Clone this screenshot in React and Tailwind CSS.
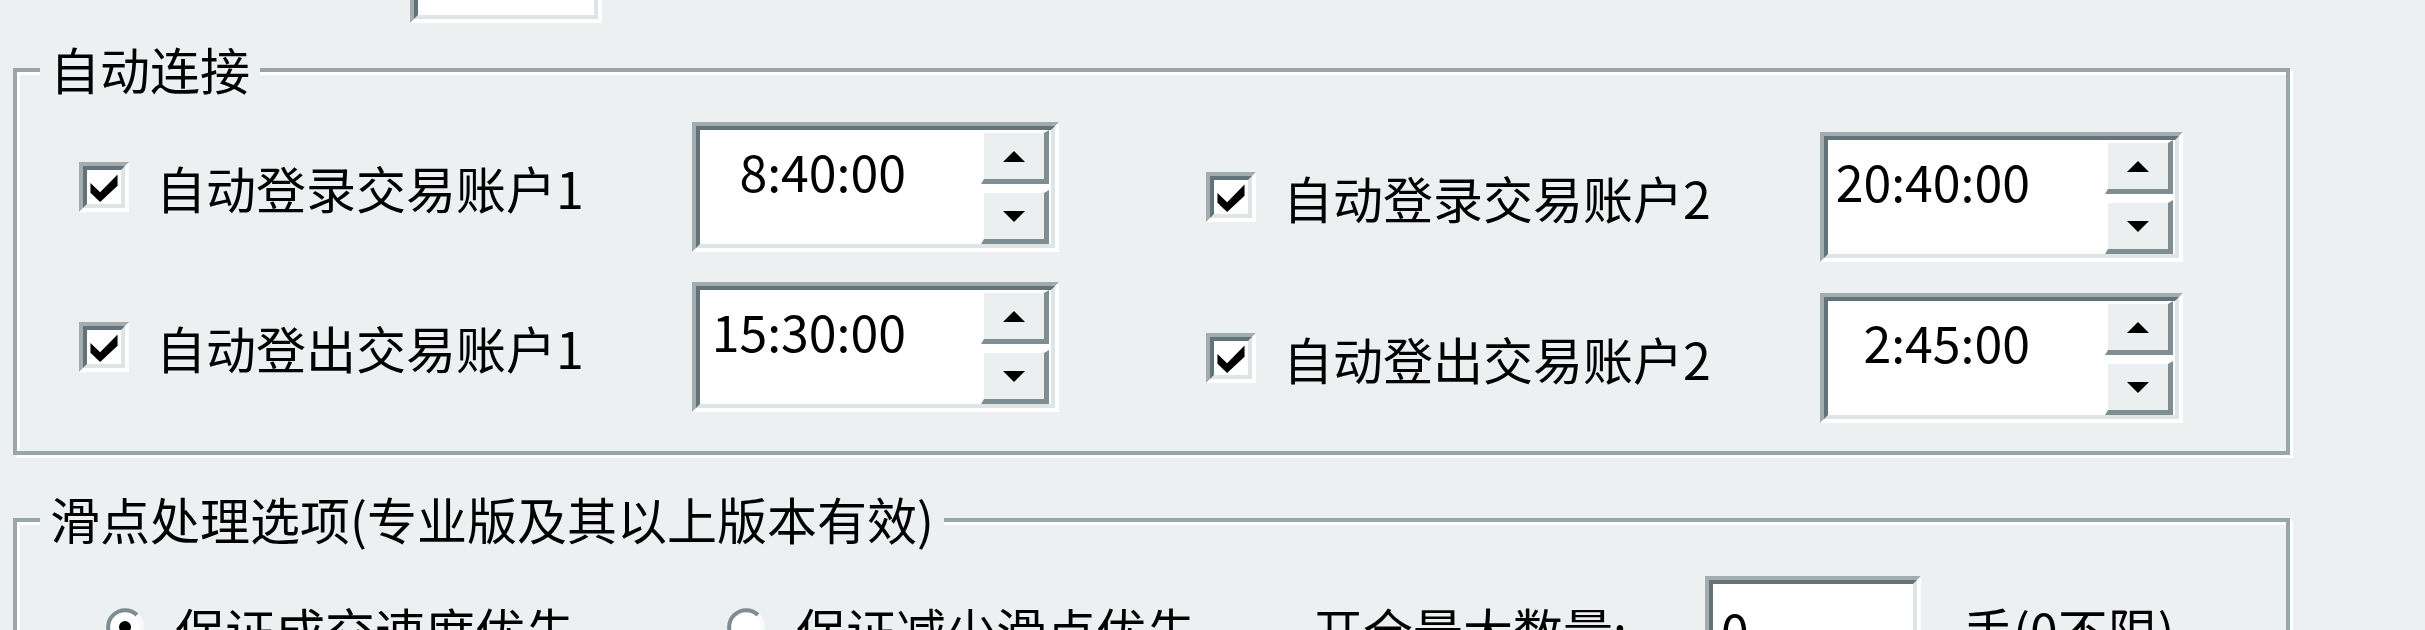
import React from 'react';

// Classic sunken 3D frame (edit boxes, checkboxes)
function Sunken({ className, innerClassName, children }) {
  return (
    <div className={`border-4 border-t-[#a3adb0] border-l-[#a3adb0] border-b-white border-r-white ${className}`}>
      <div className={`h-full border-4 border-t-[#62747a] border-l-[#62747a] border-b-[#dfe4e5] border-r-[#dfe4e5] bg-white ${innerClassName}`}>
        {children}
      </div>
    </div>
  );
}

function CheckBox() {
  return (
    <Sunken className="h-[50px] w-[50px] shrink-0" innerClassName="flex items-center justify-center">
      <svg viewBox="0 0 7 7.5" className="h-[29px] w-[28px]" aria-hidden="true">
        <polygon points="0,2.6 2.5,5 7,0.4 7,3.3 2.5,7.5 0,5.1" fill="#000" />
      </svg>
    </Sunken>
  );
}

function Arrow({ up }) {
  return (
    <svg viewBox="0 0 22 11" className="h-[11px] w-[22px]" aria-hidden="true">
      <polygon points={up ? '0,11 11,0 22,11' : '0,0 22,0 11,11'} fill="#000" />
    </svg>
  );
}

function SpinButton({ up }) {
  return (
    <div className="flex flex-1 items-center justify-center border-t-[3px] border-l-[3px] border-b-[5px] border-r-[5px] border-t-white border-l-white border-b-[#7f8e93] border-r-[#7f8e93] bg-[#eceff0]">
      <Arrow up={up} />
    </div>
  );
}

function TimeSpin({ value, width }) {
  return (
    <Sunken className={`h-[130px] shrink-0 ${width}`} innerClassName="flex">
      <div className="flex-1 pr-[75px] pt-[10px] text-right text-[50px] leading-[60px]">{value}</div>
      <div className="flex w-[70px] flex-col gap-[6px] pr-[2px]">
        <SpinButton up />
        <SpinButton />
      </div>
    </Sunken>
  );
}

function Radio({ checked }) {
  return (
    <svg viewBox="0 0 38 38" className="mt-[32px] h-[38px] w-[38px] shrink-0" aria-hidden="true">
      <circle cx="19" cy="19" r="17" fill="#fff" />
      <path d="M6.98 31.02 A17 17 0 0 1 31.02 6.98" fill="none" stroke="#7d8d92" strokeWidth="4" />
      <path d="M31.02 6.98 A17 17 0 0 1 6.98 31.02" fill="none" stroke="#f8fafa" strokeWidth="4" />
      {checked && <circle cx="19" cy="19" r="6" fill="#000" />}
    </svg>
  );
}

function GroupBox({ title, className, children }) {
  return (
    <div className={`relative ml-[13px] w-[2277px] shrink-0 border-4 border-[#98a6a9] shadow-[inset_3px_3px_0_#fff,3px_3px_0_#fff] ${className}`}>
      <div className="absolute -top-[34px] left-[23px] bg-[#edf0f1] px-[10px] text-[50px] leading-[60px]">{title}</div>
      {children}
    </div>
  );
}

function AccountRow({ label, time, labelWidth, spinWidth }) {
  return (
    <div className="flex items-center">
      <CheckBox />
      <div className={`ml-[27px] text-[50px] leading-[60px] ${labelWidth}`}>{label}</div>
      <TimeSpin value={time} width={spinWidth} />
    </div>
  );
}

export default function App() {
  return (
    <div className="flex h-[630px] w-[2425px] flex-col overflow-hidden bg-[#edf0f1] font-['Noto_Sans_CJK_SC',sans-serif] text-black">
      {/* edit box cut off at the top */}
      <div className="ml-[410px] h-[23px] w-[192px] shrink-0 border-r-4 border-b-4 border-l-4 border-r-white border-b-white border-l-[#a3adb0]">
        <div className="h-full border-r-4 border-b-4 border-l-4 border-r-[#dfe4e5] border-b-[#dfe4e5] border-l-[#62747a] bg-white" />
      </div>

      <GroupBox title="自动连接" className="mt-[45px] h-[387px]">
        <div className="flex pl-[62px]">
          <div className="flex flex-col gap-[30px] pt-[50px]">
            <AccountRow label="自动登录交易账户1" time="8:40:00" labelWidth="w-[536px]" spinWidth="w-[367px]" />
            <AccountRow label="自动登出交易账户1" time="15:30:00" labelWidth="w-[536px]" spinWidth="w-[367px]" />
          </div>
          <div className="ml-[147px] flex flex-col gap-[31px] pt-[60px]">
            <AccountRow label="自动登录交易账户2" time="20:40:00" labelWidth="w-[537px]" spinWidth="w-[363px]" />
            <AccountRow label="自动登出交易账户2" time="2:45:00" labelWidth="w-[537px]" spinWidth="w-[363px]" />
          </div>
        </div>
      </GroupBox>

      <GroupBox title="滑点处理选项(专业版及其以上版本有效)" className="mt-[63px] h-[200px]">
        <div className="flex items-start pl-[89px] pt-[54px] text-[50px] leading-[60px]">
          <Radio checked />
          <div className="ml-[31px] mt-[23px] w-[552px] whitespace-nowrap">保证成交速度优先</div>
          <Radio />
          <div className="ml-[31px] mt-[23px] w-[517px] whitespace-nowrap">保证减少滑点优先</div>
          <div className="mt-[23px] w-[392px] whitespace-nowrap">开仓最大数量:</div>
          <Sunken className="h-[90px] w-[216px] shrink-0" innerClassName="pl-[8px] pt-[15px]">
            0
          </Sunken>
          <div className="ml-[42px] mt-[23px] whitespace-nowrap">手(0不限)</div>
        </div>
      </GroupBox>
    </div>
  );
}
